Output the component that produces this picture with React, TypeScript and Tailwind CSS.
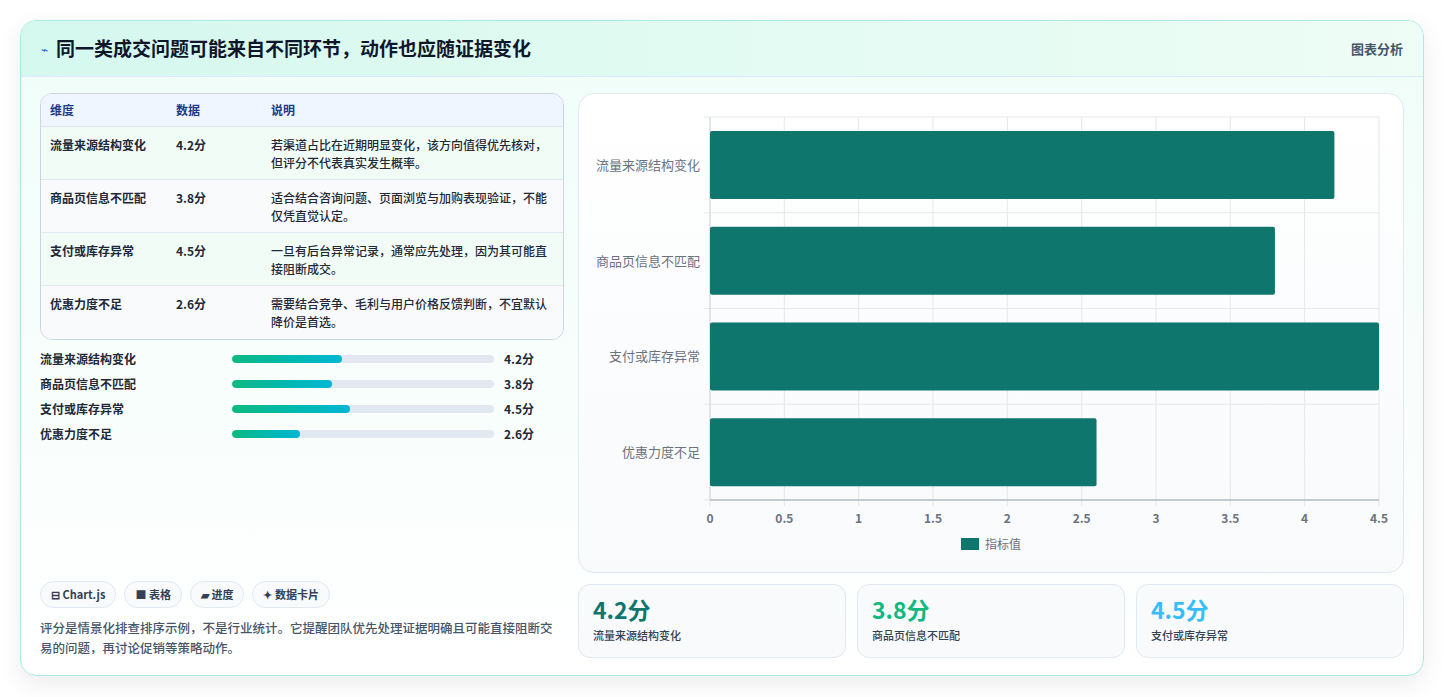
const font = { fontFamily: '"Noto Sans CJK SC", "Noto Sans", sans-serif' };

const rows = [
  { name: '流量来源结构变化', v: 4.2, desc: '若渠道占比在近期明显变化，该方向值得优先核对，但评分不代表真实发生概率。' },
  { name: '商品页信息不匹配', v: 3.8, desc: '适合结合咨询问题、页面浏览与加购表现验证，不能仅凭直觉认定。' },
  { name: '支付或库存异常', v: 4.5, desc: '一旦有后台异常记录，通常应先处理，因为其可能直接阻断成交。' },
  { name: '优惠力度不足', v: 2.6, desc: '需要结合竞争、毛利与用户价格反馈判断，不宜默认降价是首选。' },
];

function Chart() {
  // svg coords relative to the chart panel (824x480)
  const x0 = 131, x1 = 800, y0 = 23, y1 = 406;
  const sx = (v: number) => x0 + ((x1 - x0) * v) / 4.5;
  const rowH = (y1 - y0) / 4;
  const ticks = [0, 0.5, 1, 1.5, 2, 2.5, 3, 3.5, 4, 4.5];
  return (
    <svg width="824" height="478" className="block">
      {ticks.map((t) => (
        <line key={t} x1={sx(t)} x2={sx(t)} y1={y0} y2={y1 + 6} stroke="#e5e7eb" />
      ))}
      {[0, 1, 2, 3, 4].map((i) => (
        <line key={i} x1={x0 - 6} x2={x1} y1={y0 + i * rowH} y2={y0 + i * rowH} stroke="#e5e7eb" />
      ))}
      <line x1={x0} x2={x0} y1={y0} y2={y1} stroke="#d1d5db" />
      <line x1={x0} x2={x1} y1={y1} y2={y1} stroke="#9ca3af" />
      {rows.map((r, i) => (
        <g key={r.name}>
          <rect x={x0} y={y0 + i * rowH + 14} width={sx(r.v) - x0} height={68} rx="2" fill="#0f766e" />
          <text x={x0 - 10} y={y0 + i * rowH + rowH / 2 + 5} textAnchor="end" fontSize="13" fill="#6b7280">{r.name}</text>
        </g>
      ))}
      {ticks.map((t) => (
        <text key={t} x={sx(t)} y={y1 + 23} textAnchor="middle" fontSize="12" fontWeight="600" fill="#6b7280">{t}</text>
      ))}
      <rect x="382" y="444" width="18" height="12" fill="#0f766e" />
      <text x="406" y="455" fontSize="12" fill="#6b7280">指标值</text>
    </svg>
  );
}

export default function App() {
  return (
    <div className="w-[1444px] h-[697px] bg-white pt-[20px] pl-[20px]" style={font}>
      <div className="w-[1404px] h-[656px] rounded-2xl border border-[#a7ecdf] shadow-[0_8px_24px_rgba(0,0,0,0.08)] bg-gradient-to-b from-[#effdf8] to-white overflow-hidden">
        <div className="h-[56px] flex items-center justify-between px-5 bg-gradient-to-r from-[#d5f8ee] to-[#eefdf6] border-b border-[#dbeafe]">
          <div className="flex items-center gap-2">
            <span className="text-[#2563eb] text-xs">⌁</span>
            <h1 className="text-[19px] font-bold text-[#0f172a]">同一类成交问题可能来自不同环节，动作也应随证据变化</h1>
          </div>
          <span className="text-[13px] font-semibold text-[#475569]">图表分析</span>
        </div>
        <div className="flex gap-[14px] px-[19px] pt-[16px]">
          <div className="w-[527px] flex flex-col">
            <div className="rounded-xl border border-[#cbd5e1] overflow-hidden text-[12px] text-[#1f2937]">
              <div className="flex h-[33px] items-center bg-[#eff6ff] border-b border-[#dbe3ef] font-semibold text-[#1e3a8a]">
                <div className="w-[135px] pl-[9px]">维度</div>
                <div className="w-[95px]">数据</div>
                <div>说明</div>
              </div>
              {rows.map((r, i) => (
                <div key={r.name} className={`flex h-[53px] pt-[9px] ${i < 3 ? 'border-b border-[#e2e8f0]' : ''} ${i % 2 ? 'bg-[#f8fafc]' : 'bg-[#f2fcf6]'}`}>
                  <div className="w-[135px] pl-[9px] font-semibold">{r.name}</div>
                  <div className="w-[95px] font-semibold">{r.v}分</div>
                  <div className="w-[285px] leading-[18px] font-medium">{r.desc}</div>
                </div>
              ))}
            </div>
            <div className="mt-[10px] flex flex-col gap-[7px]">
              {rows.map((r) => (
                <div key={r.name} className="flex items-center h-[18px] text-[12px] font-semibold text-[#1f2937]">
                  <div className="w-[192px]">{r.name}</div>
                  <div className="w-[262px] h-[8px] rounded-full bg-[#e2e8f0] overflow-hidden">
                    <div className="h-full rounded-full bg-gradient-to-r from-[#10b981] to-[#06b6d4]" style={{ width: `${r.v * 10}%` }} />
                  </div>
                  <div className="ml-[10px]">{r.v}分</div>
                </div>
              ))}
            </div>
            <div className="mt-[138px] flex gap-[8px] text-[11px] font-semibold text-[#334155]">
              {['⊟ Chart.js', '■ 表格', '▰ 进度', '✦ 数据卡片'].map((p) => (
                <span key={p} className="h-[27px] px-[10px] flex items-center rounded-full border border-[#e2e8f0] bg-[#f8fafc]">{p}</span>
              ))}
            </div>
            <p className="mt-[10px] text-[12.5px] leading-[20px] text-[#475569] font-medium">评分是情景化排查排序示例，不是行业统计。它提醒团队优先处理证据明确且可能直接阻断交易的问题，再讨论促销等策略动作。</p>
          </div>
          <div className="flex-1 flex flex-col gap-[11px]">
            <div className="h-[480px] rounded-2xl border border-[#e2e8f0] bg-gradient-to-b from-white to-[#f8fafc] overflow-hidden">
              <Chart />
            </div>
            <div className="flex gap-[11px]">
              {[
                { v: '4.2分', l: '流量来源结构变化', c: 'text-[#0f766e]' },
                { v: '3.8分', l: '商品页信息不匹配', c: 'text-[#10b981]' },
                { v: '4.5分', l: '支付或库存异常', c: 'text-[#38bdf8]' },
              ].map((s) => (
                <div key={s.l} className="flex-1 h-[74px] rounded-xl border border-[#e2e8f0] bg-[#f8fafc] px-[14px] pt-[9px]">
                  <div className={`text-[23px] font-bold leading-[30px] ${s.c}`}>{s.v}</div>
                  <div className="text-[11px] font-medium text-[#334155] mt-[3px]">{s.l}</div>
                </div>
              ))}
            </div>
          </div>
        </div>
      </div>
    </div>
  );
}
